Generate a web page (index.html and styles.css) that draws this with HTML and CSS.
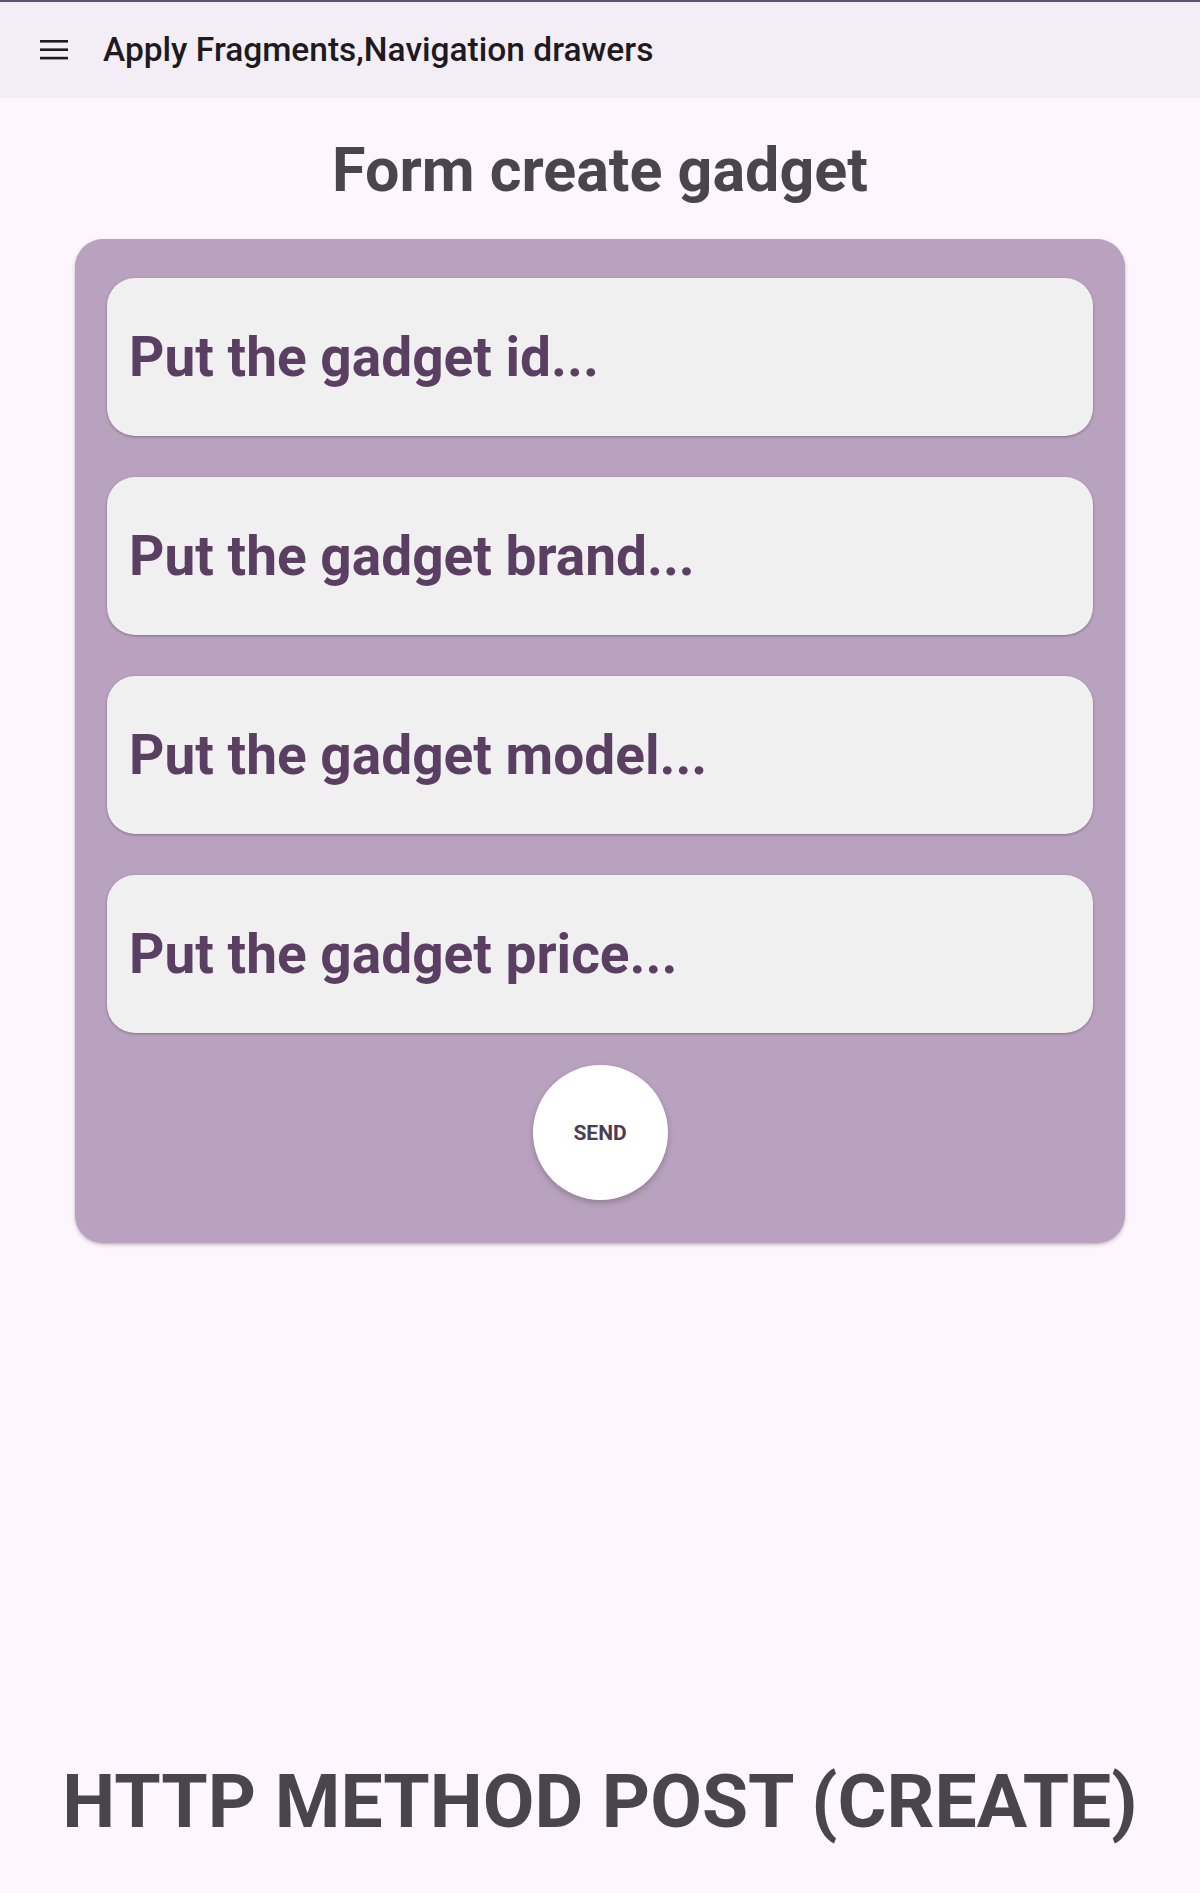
FILE: index.html
```html
<!DOCTYPE html>
<html lang="en">
<head>
<meta charset="utf-8">
<title>Apply Fragments,Navigation drawers</title>
<link rel="stylesheet" href="styles.css">
</head>
<body>
<div class="page">
  <header class="app-bar">
    <button class="menu-btn" aria-label="Open navigation drawer">
      <svg width="28" height="20" viewBox="0 0 28 20" aria-hidden="true">
        <rect x="0" y="0" width="28" height="2.6" fill="#1d1b20"/>
        <rect x="0" y="8.4" width="28" height="2.6" fill="#1d1b20"/>
        <rect x="0" y="16.8" width="28" height="2.6" fill="#1d1b20"/>
      </svg>
    </button>
    <h1 class="app-title">Apply Fragments,Navigation drawers</h1>
  </header>

  <main class="content">
    <h2 class="form-title">Form create gadget</h2>
    <form class="form-card">
      <input class="field" type="text" placeholder="Put the gadget id...">
      <input class="field" type="text" placeholder="Put the gadget brand...">
      <input class="field" type="text" placeholder="Put the gadget model...">
      <input class="field" type="text" placeholder="Put the gadget price...">
      <button class="send-btn" type="button">SEND</button>
    </form>
  </main>

  <footer class="method">HTTP METHOD POST (CREATE)</footer>
</div>
</body>
</html>
```

FILE: styles.css
```css
* {
  box-sizing: border-box;
}

html, body {
  margin: 0;
  padding: 0;
}

body {
  background: #fdf7fd;
  font-family: Roboto, "Liberation Sans", Arial, sans-serif;
}

.page {
  min-height: 1893px;
  display: flex;
  flex-direction: column;
}

.app-bar {
  height: 98px;
  border-top: 2px solid #5d5170;
  background: #f3edf6;
  display: flex;
  align-items: center;
  padding-left: 40px;
  gap: 35px;
}

.menu-btn {
  border: 0;
  padding: 0;
  background: transparent;
  width: 28px;
  height: 20px;
  display: flex;
}

.app-title {
  margin: 0;
  font-size: 33.5px;
  line-height: 1;
  font-weight: 500;
  color: #1d1b20;
}

.content {
  display: flex;
  flex-direction: column;
  align-items: center;
  flex: 1;
}

.form-title {
  margin: 42px 0 38px;
  font-size: 61px;
  line-height: 1;
  font-weight: 700;
  color: #49454f;
}

.form-card {
  align-self: stretch;
  margin: 0 75px;
  background: #b9a2bf;
  border-radius: 28px;
  padding: 39px 32px 43px;
  display: flex;
  flex-direction: column;
  align-items: center;
  gap: 41px;
  box-shadow: 0 2px 4px rgba(0, 0, 0, 0.18), 0 1px 2px rgba(0, 0, 0, 0.12);
}

.field {
  width: 100%;
  height: 158px;
  border: 0;
  border-radius: 28px;
  background: #f1f0f1;
  padding: 0 0 0 22px;
  font-family: Roboto, "Liberation Sans", Arial, sans-serif;
  font-size: 55px;
  font-weight: 700;
  color: #5b3f63;
  box-shadow: 0 1px 3px rgba(0, 0, 0, 0.3);
  outline: none;
}

.field::placeholder {
  color: #5b3f63;
  opacity: 1;
}

.send-btn {
  margin-top: -9px;
  width: 135px;
  height: 135px;
  border-radius: 50%;
  border: 0;
  background: #ffffff;
  font-family: Roboto, "Liberation Sans", Arial, sans-serif;
  font-size: 21px;
  font-weight: 700;
  color: #4c3d55;
  box-shadow: 0 3px 6px rgba(0, 0, 0, 0.22);
}

.method {
  margin: 0 0 54px;
  text-align: center;
  font-size: 75px;
  line-height: 1;
  font-weight: 700;
  color: #49454f;
}
```
